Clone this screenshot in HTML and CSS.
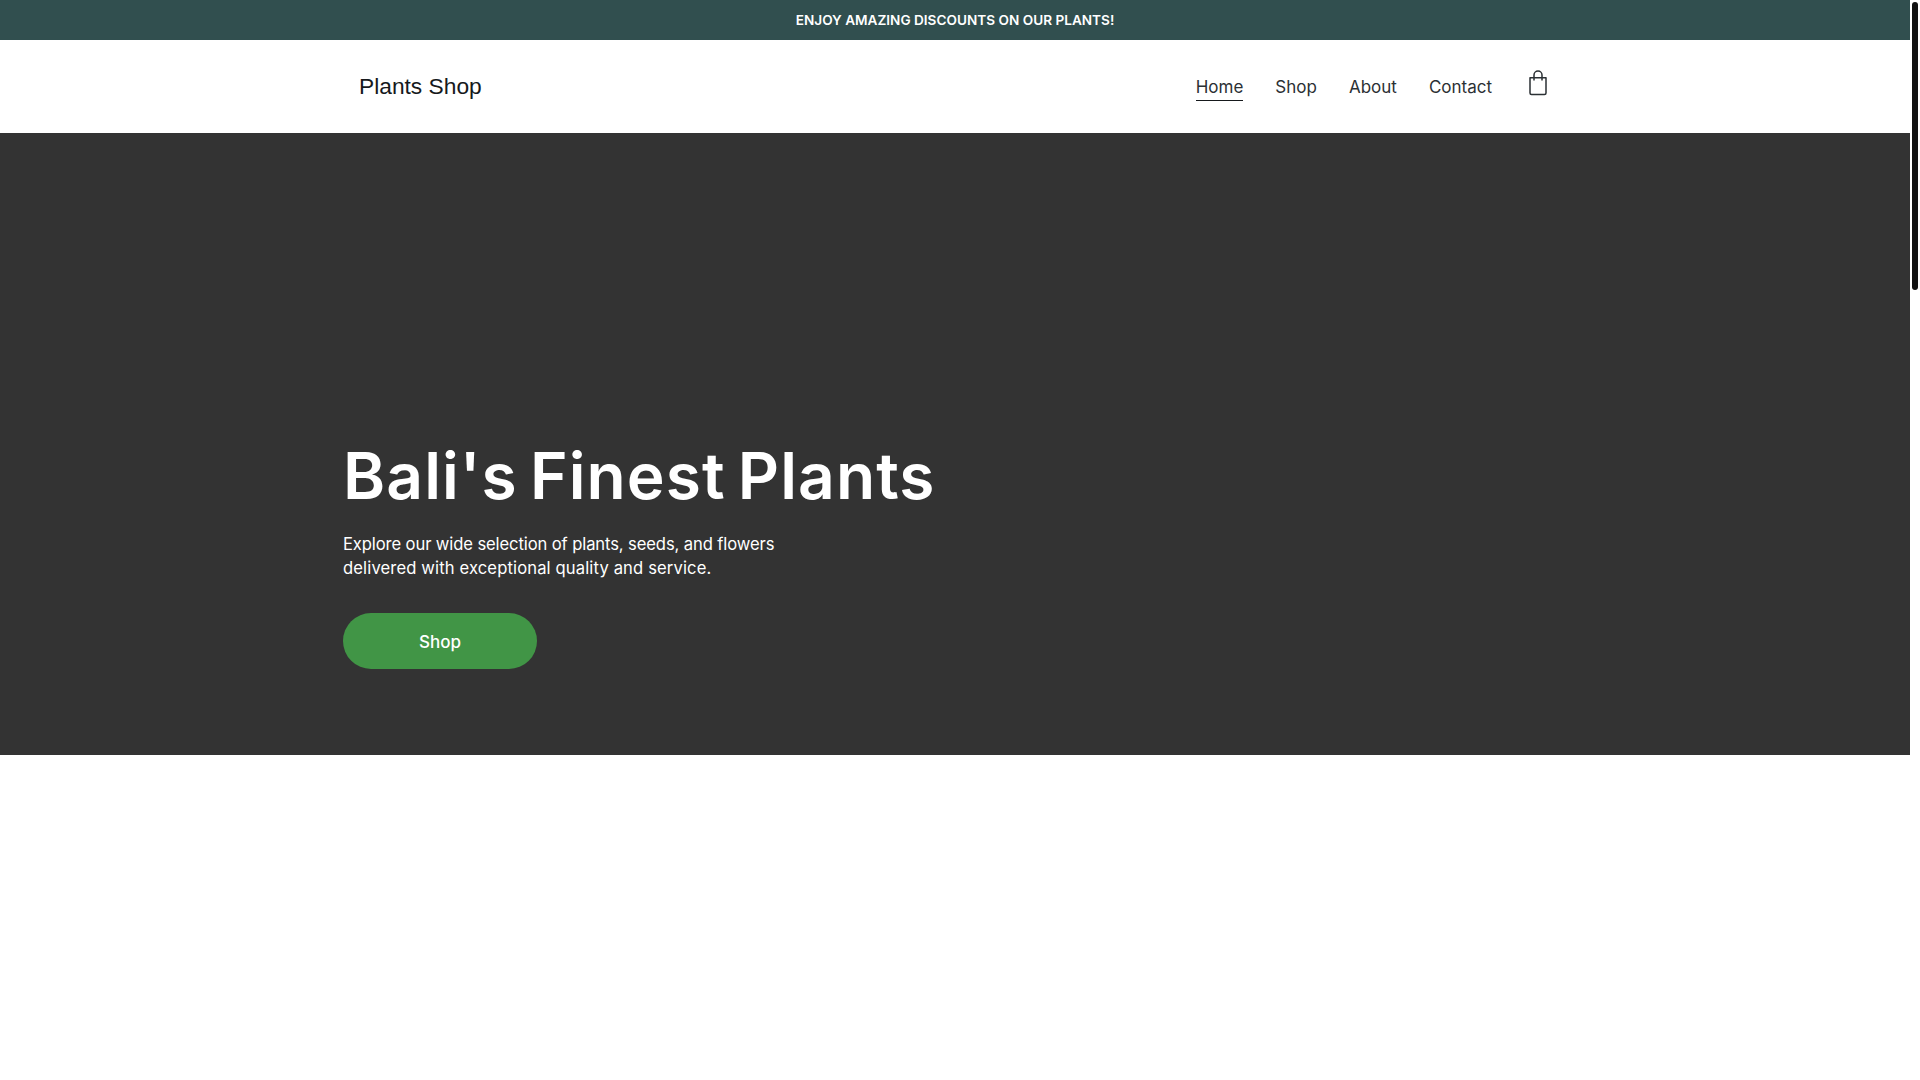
FILE: index.html
```html
<!DOCTYPE html>
<html lang="en">
<head>
    <meta charset="UTF-8">
    <meta name="viewport" content="width=device-width, initial-scale=1.0">
    <title>Plants Shop</title>
    <link rel="stylesheet" href="styles.css">
</head>
<body>
    <div class="page">
        <div class="promo">ENJOY AMAZING DISCOUNTS ON OUR PLANTS!</div>
        <header class="site-header">
            <div class="header-inner">
                <a class="logo" href="#">Plants Shop</a>
                <nav class="nav">
                    <a class="nav-link active" href="#">Home</a>
                    <a class="nav-link" href="#">Shop</a>
                    <a class="nav-link" href="#">About</a>
                    <a class="nav-link" href="#">Contact</a>
                </nav>
                <a class="cart" href="#" aria-label="Cart">
                    <svg width="20" height="26" viewBox="0 0 20 26" fill="none" stroke="#2b3034" stroke-width="1.500" stroke-linejoin="round">
                        <path d="M2 7.750h16v15.250a1.500 1.500 0 0 1-1.500 1.500h-13a1.500 1.500 0 0 1-1.500-1.500z"/>
                        <path d="M6 10.500v-5.500a4 4 0 0 1 8 0v5.500"/>
                    </svg>
                </a>
            </div>
        </header>
        <section class="hero">
            <div class="hero-inner">
                <h1>Bali's Finest Plants</h1>
                <p>
                    <span class="line-one">Explore our wide selection of plants, seeds, and flowers</span>
                    <span class="line-two">delivered with exceptional quality and service.</span>
                </p>
                <a class="button" href="#">Shop</a>
            </div>
        </section>
    </div>
    <div class="scrollbar"><div class="scrollbar-thumb"></div></div>
</body>
</html>
```

FILE: styles.css
```css
html, body {
    height: 100%;
}
body {
    font-family: 'Inter', 'Liberation Sans', sans-serif;
    background: white;
    color: #212529;
    display: flex;
    height: 100vh;
    margin: 0;
    overflow: hidden;
}
a {
    color: inherit;
    text-decoration: none;
}
.page {
    flex: 1;
    min-width: 0;
}
.promo {
    background: #314f4f;
    color: white;
    height: 40px;
    line-height: 40px;
    text-align: center;
    font-size: 13.6px;
    font-weight: 600;
}
.site-header {
    height: 93px;
    background: white;
}
.header-inner {
    width: 1224px;
    height: 100%;
    margin: 0 auto;
    padding: 0 19px 0 16px;
    box-sizing: border-box;
    display: flex;
    align-items: center;
}
.logo {
    font-family: 'Liberation Sans', sans-serif;
    font-size: 22.75px;
    color: #16191c;
    margin-right: auto;
}
.nav {
    display: flex;
    gap: 32px;
}
.nav-link {
    font-size: 17px;
    line-height: 26px;
    color: #2b3034;
}
.nav-link.active {
    border-bottom: 1px solid #16191c;
    margin-bottom: -1px;
}
.cart {
    display: flex;
    margin-left: 36px;
    margin-top: -7px;
}
.hero {
    height: 622px;
    background: #333333;
    color: white;
}
.hero-inner {
    width: 1224px;
    margin: 0 auto;
    padding-top: 305px;
}
h1 {
    font-size: 64px;
    line-height: 76px;
    font-weight: 600;
    letter-spacing: 1.1px;
    word-spacing: -5px;
    margin: 0 0 18px;
}
.hero p {
    font-size: 16.6px;
    line-height: 24px;
    margin: 0 0 33px;
}
.line-one, .line-two {
    display: block;
}
.line-one {
    letter-spacing: -0.11px;
}
.line-two {
    letter-spacing: 0.13px;
}
.button {
    display: block;
    width: 194px;
    height: 56px;
    line-height: 58px;
    background: #419546;
    border-radius: 28px;
    text-align: center;
    font-size: 17px;
    font-weight: 500;
}
.scrollbar {
    flex: 0 0 10px;
    background: white;
}
.scrollbar-thumb {
    width: 6px;
    height: 288px;
    margin: 2px 0 0 2px;
    background: #111111;
    border-radius: 3px;
}
```
